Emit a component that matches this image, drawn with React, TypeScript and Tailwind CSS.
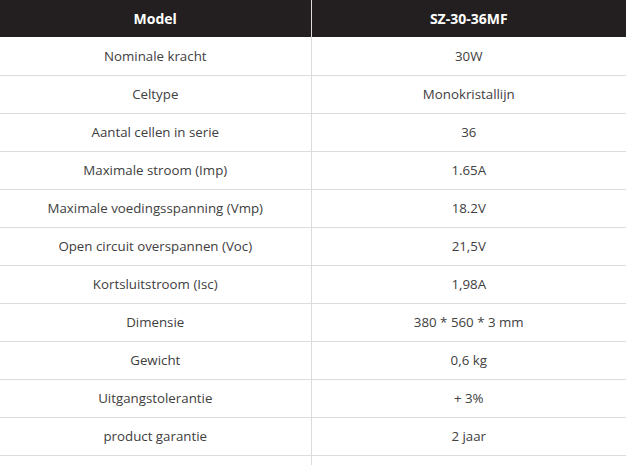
const rows: [string, string][] = [
  ["Nominale kracht", "30W"],
  ["Celtype", "Monokristallijn"],
  ["Aantal cellen in serie", "36"],
  ["Maximale stroom (Imp)", "1.65A"],
  ["Maximale voedingsspanning (Vmp)", "18.2V"],
  ["Open circuit overspannen (Voc)", "21,5V"],
  ["Kortsluitstroom (Isc)", "1,98A"],
  ["Dimensie", "380 * 560 * 3 mm"],
  ["Gewicht", "0,6 kg"],
  ["Uitgangstolerantie", "+ 3%"],
  ["product garantie", "2 jaar"],
  ["", ""],
];

export default function App() {
  return (
    <div className="w-[626px] h-[465px] overflow-hidden bg-white font-['Open_Sans',sans-serif]">
      <table className="w-[626px] border-collapse table-fixed">
        <colgroup>
          <col className="w-[311px]" />
          <col className="w-[315px]" />
        </colgroup>
        <thead>
          <tr className="h-[37px] bg-[#231f20] text-white">
            <th className="font-bold text-[14px] text-center border-r border-[#ddd] p-0">Model</th>
            <th className="font-bold text-[14px] text-center p-0">SZ-30-36MF</th>
          </tr>
        </thead>
        <tbody>
          {rows.map(([k, v], i) => (
            <tr key={i} className="h-[38px] border-b border-[#dcdcdc] text-[13.3px] text-[#404040]">
              <td className="text-center border-r border-[#dcdcdc] p-0 pt-[2px]">{k}</td>
              <td className="text-center p-0 pt-[2px]">{v}</td>
            </tr>
          ))}
        </tbody>
      </table>
    </div>
  );
}
